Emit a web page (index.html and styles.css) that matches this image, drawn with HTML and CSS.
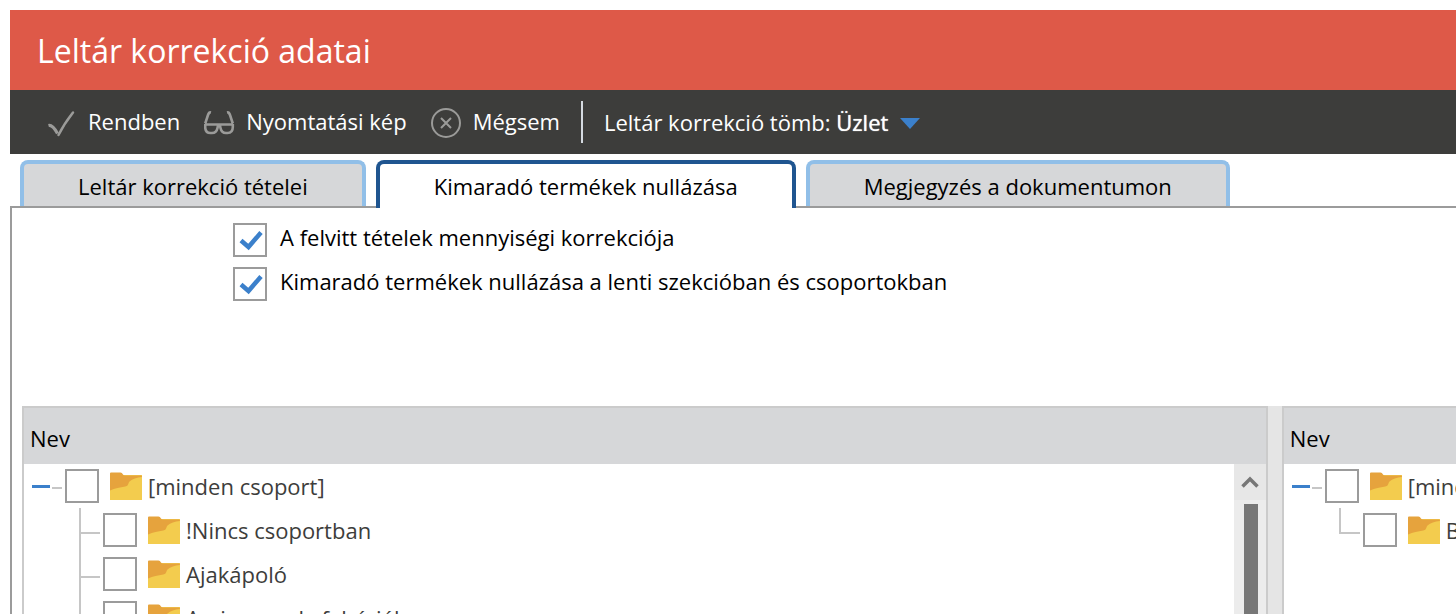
FILE: index.html
```html
<!DOCTYPE html>
<html lang="hu">
<head>
<meta charset="utf-8">
<title>Leltár korrekció adatai</title>
<link rel="stylesheet" href="styles.css">
</head>
<body>
<svg class="defs" aria-hidden="true">
  <symbol id="folder" viewBox="0 0 32 28">
    <path fill="#f3cc4e" d="M0 3h32v25H0z"/>
    <path fill="#fff" d="M12 0h20v3H12z"/>
    <path fill="#e6a33d" d="M0 1.500Q0 .5 1 .5h9.500q1.500 0 2.500 2 .5 1 2 1H31q1 0 1 1.500-8 .5-12.500 4.500-1 1-1.200 2.500-.5 2-3 2.500C10 15.500 5 16 0 18.500z"/>
  </symbol>
</svg>
<header class="title-bar"><h1 class="title">Leltár korrekció adatai</h1></header>
<nav class="toolbar">
  <div class="tools">
    <button class="tool" type="button">
      <svg class="tool-icon" viewBox="0 0 32 32" fill="none" stroke="#9b9b99"><path stroke-width="3.200" d="M2.500 19.500q4-1 9 8"/><path stroke-width="2.500" stroke-linecap="round" d="M12.500 29Q18 18 27 6.500"/></svg>
      <span class="tool-text">Rendben</span>
    </button>
    <button class="tool" type="button">
      <svg class="tool-icon" viewBox="0 0 32 32" fill="none" stroke="#9b9b99" stroke-width="2.600"><path d="M7 6.500Q5 6 4 9L1.200 17.500M23 6.500q2-.5 3 2.500l2.800 8.500M1 18.500h28M1.200 18v3q0 6 5.300 6H8q4.500 0 5.500-5l.6-3h1.800l.6 3q1 5 5.500 5h1.500q5.300 0 5.300-6v-3"/></svg>
      <span class="tool-text">Nyomtatási kép</span>
    </button>
    <button class="tool" type="button">
      <svg class="tool-icon" viewBox="0 0 32 32" fill="none" stroke="#9b9b99" stroke-width="2"><circle cx="15" cy="17" r="14"/><path d="M10 12l10 10M20 12L10 22"/></svg>
      <span class="tool-text">Mégsem</span>
    </button>
  </div>
  <span class="divider"></span>
  <button class="block-menu" type="button">
    <span>Leltár korrekció tömb: <b class="block-name">Üzlet</b></span>
    <svg class="caret" viewBox="0 0 20 16"><path fill="#3b80cb" d="M0 4h20L10 15z"/></svg>
  </button>
</nav>
<div class="tabs" role="tablist">
  <button class="tab" type="button" role="tab" aria-selected="false">Leltár korrekció tételei</button>
  <button class="tab tab-active" type="button" role="tab" aria-selected="true">Kimaradó termékek nullázása</button>
  <button class="tab" type="button" role="tab" aria-selected="false">Megjegyzés a dokumentumon</button>
</div>
<main class="panel">
  <div class="options">
    <label class="option"><input class="check" type="checkbox" checked><span class="option-text">A felvitt tételek mennyiségi korrekciója</span></label>
    <label class="option"><input class="check" type="checkbox" checked><span class="option-text">Kimaradó termékek nullázása a lenti szekcióban és csoportokban</span></label>
  </div>
  <div class="grids">
    <section class="grid grid-groups">
      <h2 class="grid-head">Nev</h2>
      <div class="grid-body">
        <ul class="tree">
          <li class="row"><button class="toggle" type="button" aria-label="Összecsukás"></button><label class="node"><input class="check" type="checkbox"><svg class="folder"><use href="#folder"/></svg><span>[minden csoport]</span></label></li>
          <li class="row child"><label class="node"><input class="check" type="checkbox"><svg class="folder"><use href="#folder"/></svg><span>!Nincs csoportban</span></label></li>
          <li class="row child"><label class="node"><input class="check" type="checkbox"><svg class="folder"><use href="#folder"/></svg><span>Ajakápoló</span></label></li>
          <li class="row child"><label class="node"><input class="check" type="checkbox"><svg class="folder"><use href="#folder"/></svg><span>Aminosavak, fehérjék</span></label></li>
        </ul>
        <div class="scroll">
          <button class="scroll-up" type="button" aria-label="Fel"><svg class="chevron" viewBox="0 0 18 12"><path fill="none" stroke="#777" stroke-width="3.500" d="M1.500 10.500L9 3l7.500 7.500"/></svg></button>
          <div class="thumb"></div>
        </div>
      </div>
    </section>
    <div class="splitter"></div>
    <section class="grid grid-sections">
      <h2 class="grid-head">Nev</h2>
      <div class="grid-body">
        <ul class="tree">
          <li class="row"><button class="toggle" type="button" aria-label="Összecsukás"></button><label class="node"><input class="check" type="checkbox"><svg class="folder"><use href="#folder"/></svg><span>[minden szekció]</span></label></li>
          <li class="row child"><label class="node"><input class="check" type="checkbox"><svg class="folder"><use href="#folder"/></svg><span>Bolt</span></label></li>
        </ul>
      </div>
    </section>
  </div>
</main>
</body>
</html>
```
FILE: styles.css
```css
* { box-sizing: border-box; }
html { height: 100%; }
body {
  margin: 0;
  padding: 10px 0 0 10px;
  height: 100%;
  display: flex;
  flex-direction: column;
  overflow: hidden;
  background: #fff;
  color: #000;
  font: 22px/30px "Open Sans", "Noto Sans", sans-serif;
}
button { margin: 0; padding: 0; border: 0; background: none; color: inherit; font: inherit; white-space: nowrap; }
h1, h2, ul { margin: 0; padding: 0; font-weight: 400; list-style: none; }
svg { display: block; flex: none; }
.defs { position: absolute; width: 0; height: 0; }

.title-bar { flex: none; padding: 19px 27px 17px; background: #de5948; color: #fff; }
.title { font-size: 32px; line-height: 44px; }

.toolbar { flex: none; display: flex; align-items: center; gap: 21px; height: 64px; padding-left: 36px; background: #3d3d3b; color: #fff; }
.tools { display: flex; gap: 24px; }
.tool { display: flex; align-items: center; gap: 10px; }
.tool-icon { width: 32px; height: 32px; }
.tool-text { padding-bottom: 2px; }
.divider { width: 2px; height: 42px; background: #d5dae0; }
.block-menu { display: flex; align-items: center; gap: 12px; }
.block-name { font-weight: 400; text-shadow: 0 0 1px #fff; }
.caret { width: 20px; height: 16px; }

.tabs { flex: none; display: flex; gap: 10px; padding: 6px 0 0 10px; position: relative; }
.tab { height: 46px; padding: 2px 54px 0; border: 4px solid #91bfe8; border-bottom: 0; border-radius: 8px 8px 0 0; background: #d6d7d9; }
.tab-active { height: 48px; margin-bottom: -2px; padding-top: 0; border-color: #1f5590; background: #fff; }

.panel { flex: 1; min-height: 0; display: flex; flex-direction: column; border: solid #9b9b9b; border-width: 2px 0 0 2px; }
.options { flex: none; padding: 10px 0 100px 221px; }
.option { display: flex; align-items: center; gap: 13px; height: 44px; }
.option-text { padding-bottom: 6px; }
.check { appearance: none; flex: none; width: 34px; height: 34px; margin: 0; border: 2px solid #9b9b9b; background: #fff; }
.check:checked { background: #fff url("data:image/svg+xml,%3Csvg xmlns='http://www.w3.org/2000/svg' viewBox='0 0 30 30'%3E%3Cpath fill='none' stroke='%233b80cb' stroke-width='4.500' d='M6 15.500l7.500 6.500L26 7.500'/%3E%3C/svg%3E"); }

.grids { flex: 1; min-height: 0; display: flex; padding-left: 10px; }
.grid { display: flex; flex-direction: column; min-width: 0; border: 2px solid #cbcbcb; border-bottom: 0; overflow: hidden; }
.grid-groups { flex: 1247; }
.grid-sections { flex: 173; border-right: 0; }
.splitter { flex: none; width: 14px; background: #e5e5e5; }
.grid-head { flex: none; height: 56px; padding: 15px 6px 0; background: #d6d7d9; font-size: 22px; line-height: 30px; }
.grid-body { flex: 1; min-height: 0; display: flex; }
.tree { flex: 1; min-width: 0; overflow: hidden; color: #3d3d3b; }
.row { display: flex; align-items: center; height: 44px; padding-left: 8px; white-space: nowrap; }
.toggle { flex: none; width: 33px; height: 6px; background: linear-gradient(#3b80cb, #3b80cb) 0 2px / 18px 3px no-repeat, linear-gradient(#c6c6c6, #c6c6c6) 20px 4px / 10px 2px no-repeat; }
.node { display: flex; align-items: center; }
.folder { width: 32px; height: 28px; margin: 0 6px 0 11px; }
.child { padding-left: 79px; background: linear-gradient(#c6c6c6, #c6c6c6) 55px 0 / 2px 100% no-repeat, linear-gradient(#c6c6c6, #c6c6c6) 57px 24px / 19px 2px no-repeat; }
.grid-sections .child:last-child { background-size: 2px 26px, 19px 2px; }
.scroll { flex: none; width: 32px; background: #ececec; }
.scroll-up { display: grid; place-items: center; width: 100%; height: 36px; background: #e7e7e7; }
.chevron { width: 18px; height: 12px; }
.thumb { width: 14px; height: 100%; margin: 4px 0 0 10px; background: #777; }
```
